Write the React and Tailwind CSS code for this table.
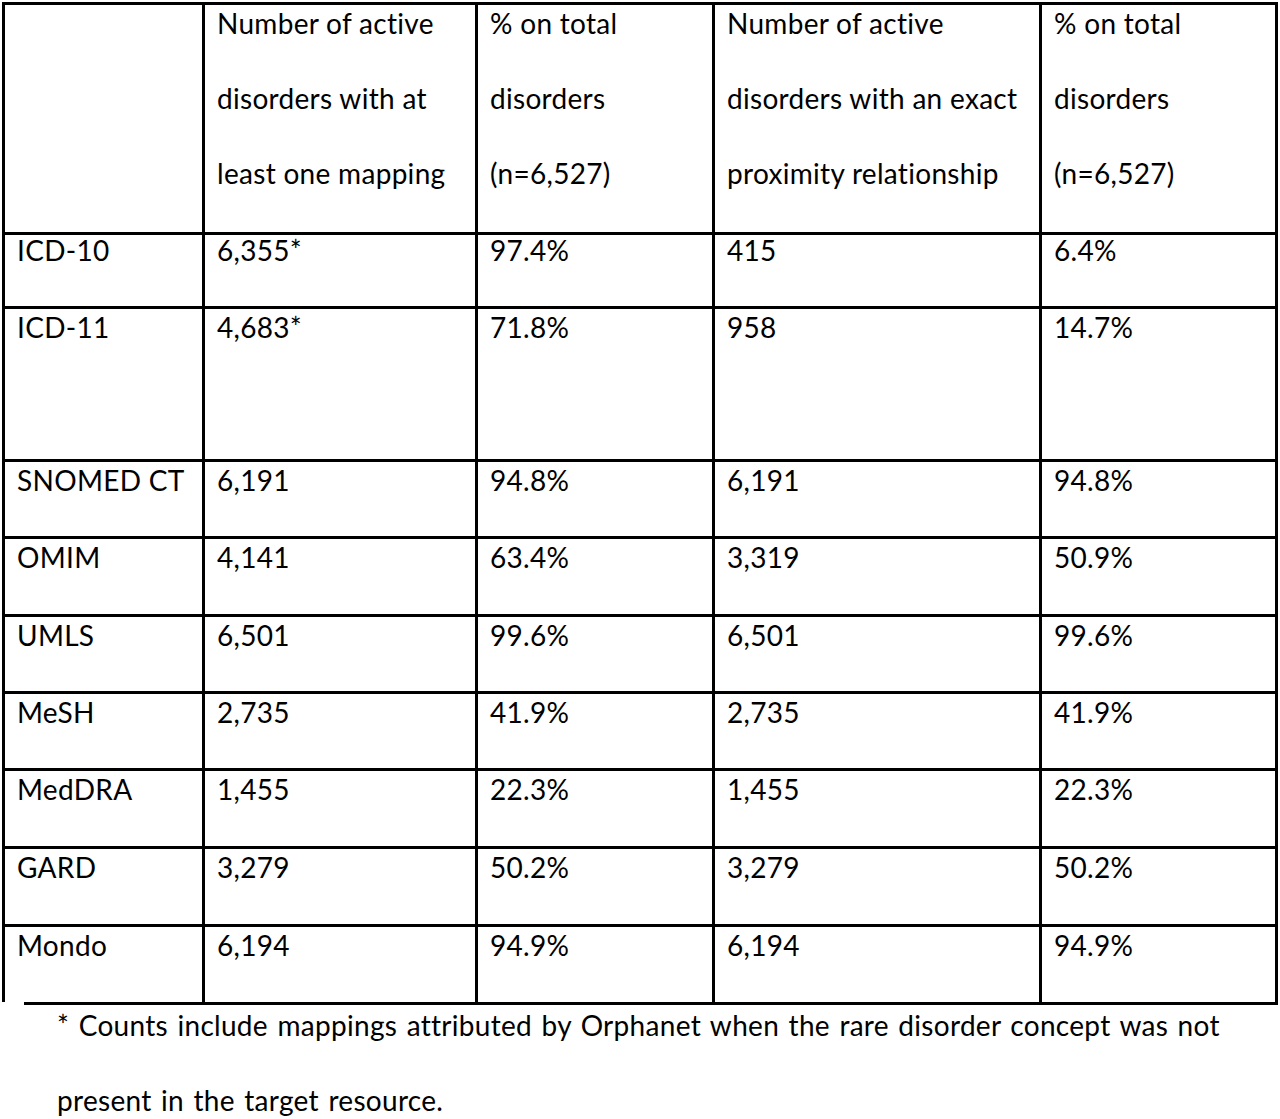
const head = [
  [],
  ['Number of active', 'disorders with at', 'least one mapping'],
  ['% on total', 'disorders', '(n=6,527)'],
  ['Number of active', 'disorders with an exact', 'proximity relationship'],
  ['% on total', 'disorders', '(n=6,527)'],
];

const rows = [
  { h: 'h-[77px]', cells: ['ICD-10', '6,355*', '97.4%', '415', '6.4%'] },
  { h: 'h-[153px]', cells: ['ICD-11', '4,683*', '71.8%', '958', '14.7%'] },
  { h: 'h-[77px]', cells: ['SNOMED CT', '6,191', '94.8%', '6,191', '94.8%'] },
  { h: 'h-[78px]', cells: ['OMIM', '4,141', '63.4%', '3,319', '50.9%'] },
  { h: 'h-[77px]', cells: ['UMLS', '6,501', '99.6%', '6,501', '99.6%'] },
  { h: 'h-[77px]', cells: ['MeSH', '2,735', '41.9%', '2,735', '41.9%'] },
  { h: 'h-[78px]', cells: ['MedDRA', '1,455', '22.3%', '1,455', '22.3%'] },
  { h: 'h-[78px]', cells: ['GARD', '3,279', '50.2%', '3,279', '50.2%'] },
  { h: 'h-[75px]', cells: ['Mondo', '6,194', '94.9%', '6,194', '94.9%'], last: true },
];

const cols = 'grid grid-cols-[200px_273px_237px_327px_236px]';

export default function App() {
  return (
    <div className="bg-white w-[1280px] h-[1119px] pt-[2px] pl-[2px] text-black text-[28px] leading-[32px] tracking-[0.3px] font-['Lato','Open_Sans',sans-serif]">
      <div className="w-[1276px] border-l-[3px] border-t-[3px] border-black">
        {/* Header */}
        <div className={`${cols} h-[227px]`}>
          {head.map((lines, i) => (
            <div key={i} className="border-r-[3px] border-b-[3px] border-black pl-[12px] pt-[2px]">
              {lines.map((l) => (
                <div key={l} className="h-[75px] whitespace-nowrap">{l}</div>
              ))}
            </div>
          ))}
        </div>

        {/* Body */}
        {rows.map((r) => (
          <div key={r.cells[0]} className={`${cols} ${r.h}`}>
            {r.cells.map((c, i) => (
              <div
                key={i}
                className={
                  r.last
                    ? 'border-r-[3px] border-black pl-[12px] pt-[2px] whitespace-nowrap'
                    : 'border-r-[3px] border-b-[3px] border-black pl-[12px] pt-[2px] whitespace-nowrap'
                }
              >
                {c}
              </div>
            ))}
          </div>
        ))}
      </div>
      <div className="ml-[22px] w-[1254px] h-[3px] bg-black" />

      {/* Footnote */}
      <div className="pl-[55px] pt-[4px] [word-spacing:2px]">
        <div className="h-[75px] whitespace-nowrap">
          * Counts include mappings attributed by Orphanet when the rare disorder concept was not
        </div>
        <div className="whitespace-nowrap">present in the target resource.</div>
      </div>
    </div>
  );
}
